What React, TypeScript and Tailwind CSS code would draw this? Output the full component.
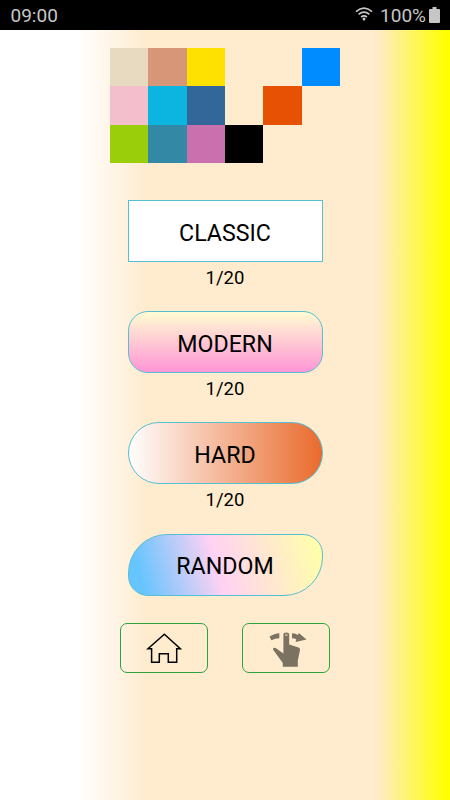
import clsx from "clsx";

// 6 columns x 3 rows, empty string is a transparent cell
const LOGO_CELLS = [
  "bg-[#e8dac0]", "bg-[#d79677]", "bg-[#ffe100]", "", "", "bg-[#008bff]",
  "bg-[#f3bfcd]", "bg-[#0cb4e0]", "bg-[#336699]", "", "bg-[#e65104]", "",
  "bg-[#9acd0a]", "bg-[#3388a5]", "bg-[#ca70ae]", "bg-black", "", "",
];

interface Mode {
  label: string;
  progress?: string;
  className: string;
}

const MODES: Mode[] = [
  { label: "CLASSIC", progress: "1/20", className: "bg-white" },
  {
    label: "MODERN",
    progress: "1/20",
    className: "rounded-[20px] bg-[linear-gradient(to_bottom,#fffed2,#ff94d6)]",
  },
  {
    label: "HARD",
    progress: "1/20",
    className: "rounded-[31px] bg-[linear-gradient(to_right,#ffffff,#e96a2b)]",
  },
  {
    label: "RANDOM",
    className:
      "rounded-tl-[39px] rounded-tr-[20px] rounded-br-[39px] rounded-bl-[20px] bg-[linear-gradient(75deg,#66c4ff_8%,#ffd2f3_46%,#ffffaa_97%)]",
  },
];

function StatusBar() {
  return (
    <div className="flex h-[30px] items-center justify-between bg-black pl-[10.5px] pr-[10px] text-[19px] leading-[30px] text-[#c6c6c6]">
      <span className="pt-px">09:00</span>
      <div className="flex items-center">
        <svg width="18" height="14" viewBox="0 0 18 14" fill="none" stroke="currentColor" strokeWidth="1.7" className="mr-[7px] -mt-0.5">
          <path d="M1 4.6Q9-2.2 17 4.6M3.6 7.4Q9 3 14.4 7.4M6.1 10Q9 7.7 11.9 10" />
          <circle cx="9" cy="12" r="1.5" fill="currentColor" stroke="none" />
        </svg>
        <span className="pt-px">100%</span>
        <svg width="11" height="16" viewBox="0 0 11 16" fill="currentColor" className="ml-[3px]">
          <path d="M3.5 0h4v2H10q1 0 1 1v12q0 1-1 1H1q-1 0-1-1V3q0-1 1-1h2.5z" />
        </svg>
      </div>
    </div>
  );
}

function Logo() {
  return (
    <div className="grid h-[115px] w-[230px] grid-cols-6 grid-rows-3">
      {LOGO_CELLS.map((color, index) => (
        <div key={index} className={color} />
      ))}
    </div>
  );
}

function ModeButton({ label, progress, className }: Mode) {
  return (
    <div className="flex h-[111.2px] flex-col items-center">
      <button
        className={clsx(
          "h-[62px] w-[195px] shrink-0 border-[1.5px] border-[#55bfd4] bg-origin-border pt-[4.6px] text-[23.2px] leading-none",
          className
        )}
      >
        {label}
      </button>
      {progress && <span className="mt-[2.9px] text-[18.5px] leading-[26px]">{progress}</span>}
    </div>
  );
}

function HomeIcon() {
  return (
    <svg width="36" height="30" viewBox="0 0 36 30" fill="none" stroke="black" strokeWidth="1.5">
      <path d="M18.4 1.3L34.3 15.8H30.7V29.2H22.3V20.8H13.3V29.2H5.6V15.8H1.9Z" />
    </svg>
  );
}

function SwipeIcon() {
  return (
    <svg width="38" height="36" viewBox="0 0 38 36" fill="#7c7262">
      <path d="M.5 5.5Q5 2.6 10.3 2V7.2Q6 7.4 2.4 9.2Z" />
      <path d="M23 2.3Q26.500 2.500 29 4L29.800 2L37.500 8.500L26.500 11L27.300 8.300Q25.500 7.500 23 7.300Z" />
      <path d="M14.4 3.6Q14.4 1.5 17.300 1.5T20.200 3.6V13.500L29.500 16.500Q31.300 17.200 31 19L28.800 29.500V35.800H13.800V32L4 18.500Q3.700 16.600 5.600 16.700Q7.300 16.900 8.800 18.600L14.400 22.500Z" />
      <path d="M15.900 5V3.900Q15.900 2.700 17.300 2.700T18.700 3.900V5Z" fill="#b8aa94" />
    </svg>
  );
}

export default function App() {
  return (
    <div className="flex h-[800px] w-[450px] flex-col overflow-hidden bg-[linear-gradient(to_right,#ffffff_78px,#ffebcd_148px,#ffebcd_375px,#ffff00_447px)] font-[Roboto,sans-serif] text-black">
      <StatusBar />
      <main className="flex flex-col items-center pt-[18px]">
        <Logo />
        <div className="mt-[37px]">
          {MODES.map((mode) => (
            <ModeButton key={mode.label} {...mode} />
          ))}
        </div>
        <div className="-mt-[21.8px] flex gap-[34px]">
          <button className="flex h-[50px] w-[88px] items-center justify-center rounded-[7px] border border-[#2ba33f]" aria-label="Home">
            <HomeIcon />
          </button>
          <button className="flex h-[50px] w-[88px] items-center justify-center rounded-[7px] border border-[#2ba33f] pl-1 pt-0.5" aria-label="Swipe">
            <SwipeIcon />
          </button>
        </div>
      </main>
    </div>
  );
}
